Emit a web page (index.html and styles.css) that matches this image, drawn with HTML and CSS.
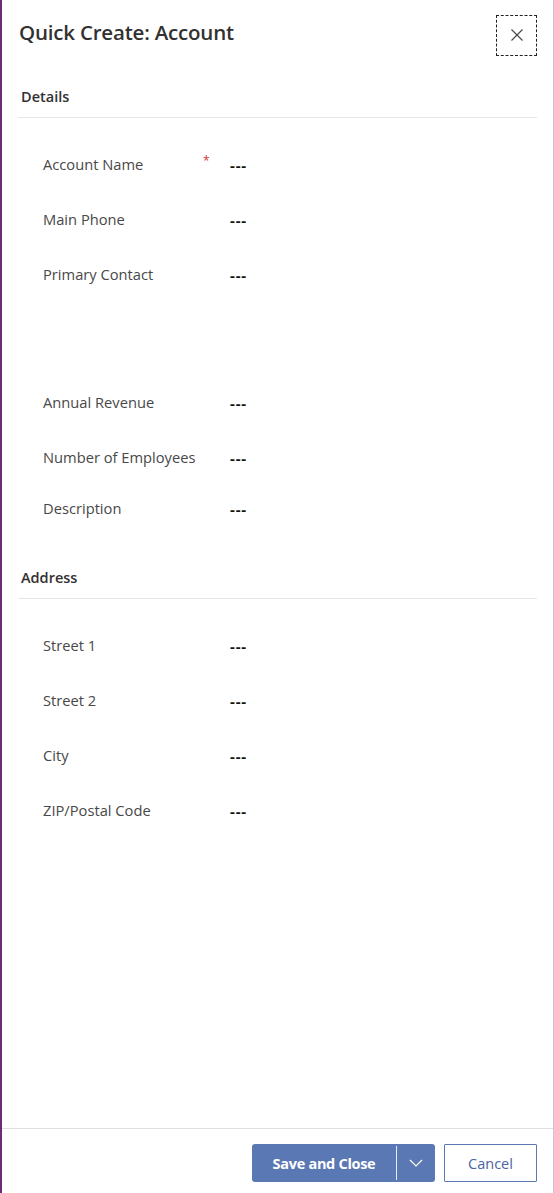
FILE: index.html
```html
<!DOCTYPE html>
<html lang="en">
<head>
<meta charset="utf-8">
<title>Quick Create: Account</title>
<link rel="stylesheet" href="styles.css">
</head>
<body>
<div class="panel">
  <header class="head">
    <h1 class="title">Quick Create: Account</h1>
    <button class="close" aria-label="Close">
      <svg width="14" height="14" viewBox="0 0 14 14"><path d="M1.5 1.5 L12.5 12.5 M12.5 1.5 L1.5 12.5" stroke="#444" stroke-width="1.1" fill="none"/></svg>
    </button>
  </header>
  <main class="content">
    <section class="section sec-details">
      <h2 class="sec-title">Details</h2>
      <div class="rows">
        <div class="row"><span class="label">Account Name</span><span class="req">*</span><span class="value">---</span></div>
        <div class="row"><span class="label">Main Phone</span><span class="req"></span><span class="value">---</span></div>
        <div class="row row-tall"><span class="label">Primary Contact</span><span class="req"></span><span class="value">---</span></div>
        <div class="row"><span class="label">Annual Revenue</span><span class="req"></span><span class="value">---</span></div>
        <div class="row row-short"><span class="label">Number of Employees</span><span class="req"></span><span class="value">---</span></div>
        <div class="row"><span class="label">Description</span><span class="req"></span><span class="value">---</span></div>
      </div>
    </section>
    <section class="section">
      <h2 class="sec-title">Address</h2>
      <div class="rows">
        <div class="row"><span class="label">Street 1</span><span class="req"></span><span class="value">---</span></div>
        <div class="row"><span class="label">Street 2</span><span class="req"></span><span class="value">---</span></div>
        <div class="row"><span class="label">City</span><span class="req"></span><span class="value">---</span></div>
        <div class="row"><span class="label">ZIP/Postal Code</span><span class="req"></span><span class="value">---</span></div>
      </div>
    </section>
  </main>
  <footer class="foot">
    <div class="split">
      <button class="primary">Save and Close</button>
      <span class="sep"></span>
      <button class="drop" aria-label="More">
        <svg width="14" height="8" viewBox="0 0 14 8"><path d="M1 1 L7 7 L13 1" stroke="#fff" stroke-width="1.2" fill="none"/></svg>
      </button>
    </div>
    <button class="cancel">Cancel</button>
  </footer>
</div>
</body>
</html>
```

FILE: styles.css
```css
html, body {
  margin: 0;
  padding: 0;
  background: #fff;
}
body {
  font-family: "Open Sans", "Noto Sans", sans-serif;
  color: #333;
}
.panel {
  box-sizing: border-box;
  height: 1193px;
  width: 554px;
  border-left: 2px solid #6f2a78;
  border-right: 1px solid #c9c4d6;
  display: flex;
  flex-direction: column;
}
.head {
  display: flex;
  align-items: center;
  justify-content: space-between;
  padding: 15px 16px 0 17px;
  height: 40px;
}
.title {
  margin: 0 0 6px 0;
  font-size: 20.5px;
  font-weight: 600;
  color: #323130;
  letter-spacing: -0.2px;
}
.close {
  width: 41px;
  height: 41px;
  border: 1px dashed #222;
  background: #fff;
  padding: 0;
  display: flex;
  align-items: center;
  justify-content: center;
}
.content {
  flex: 1;
  padding: 32px 16px 0 16px;
}
.section {
  margin-bottom: 15px;
}
.sec-title {
  margin: 0;
  padding: 0 2px 10px 3px;
  font-size: 14.5px;
  line-height: 20px;
  font-weight: 600;
  color: #323130;
  border-bottom: 1px solid #e6e6e6;
}
.rows {
  padding-top: 36px;
}
.row {
  display: grid;
  grid-template-columns: 160px 27px 1fr;
  height: 55px;
  padding-left: 25px;
  font-size: 14px;
  line-height: 20px;
}
.row-tall { height: 128px; }
.row-short { height: 51px; }
.label {
  color: #484848;
  font-size: 14.7px;
  white-space: nowrap;
}
.req {
  color: #d13438;
  font-size: 12px;
  line-height: 12px;
  padding-top: 1px;
}
.value {
  font-weight: 700;
  font-size: 15px;
  letter-spacing: 0.8px;
  color: #111;
  padding-top: 1px;
}
.foot {
  border-top: 1px solid #e1dfdd;
  height: 65px;
  box-sizing: border-box;
  padding: 15px 16px 0 0;
  display: flex;
  justify-content: flex-end;
  gap: 9px;
}
.split {
  display: flex;
  height: 38px;
  background: #5a78b3;
  border-radius: 3px;
  align-items: center;
}
.primary {
  width: 144px;
  height: 38px;
  border: 0;
  background: transparent;
  color: #fff;
  font-family: "Open Sans", "Noto Sans", sans-serif;
  font-size: 14.5px;
  font-weight: 700;
  letter-spacing: -0.3px;
  padding: 0;
}
.sep {
  width: 1px;
  height: 34px;
  background: #fff;
  opacity: 0.85;
}
.drop {
  width: 38px;
  height: 38px;
  border: 0;
  background: transparent;
  padding: 0;
  display: flex;
  align-items: center;
  justify-content: center;
}
.cancel {
  width: 93px;
  height: 38px;
  background: #fff;
  border: 1px solid #5a78b3;
  border-radius: 1px;
  color: #4a65a0;
  font-family: "Open Sans", "Noto Sans", sans-serif;
  font-size: 14.5px;
  padding: 0;
}
```
